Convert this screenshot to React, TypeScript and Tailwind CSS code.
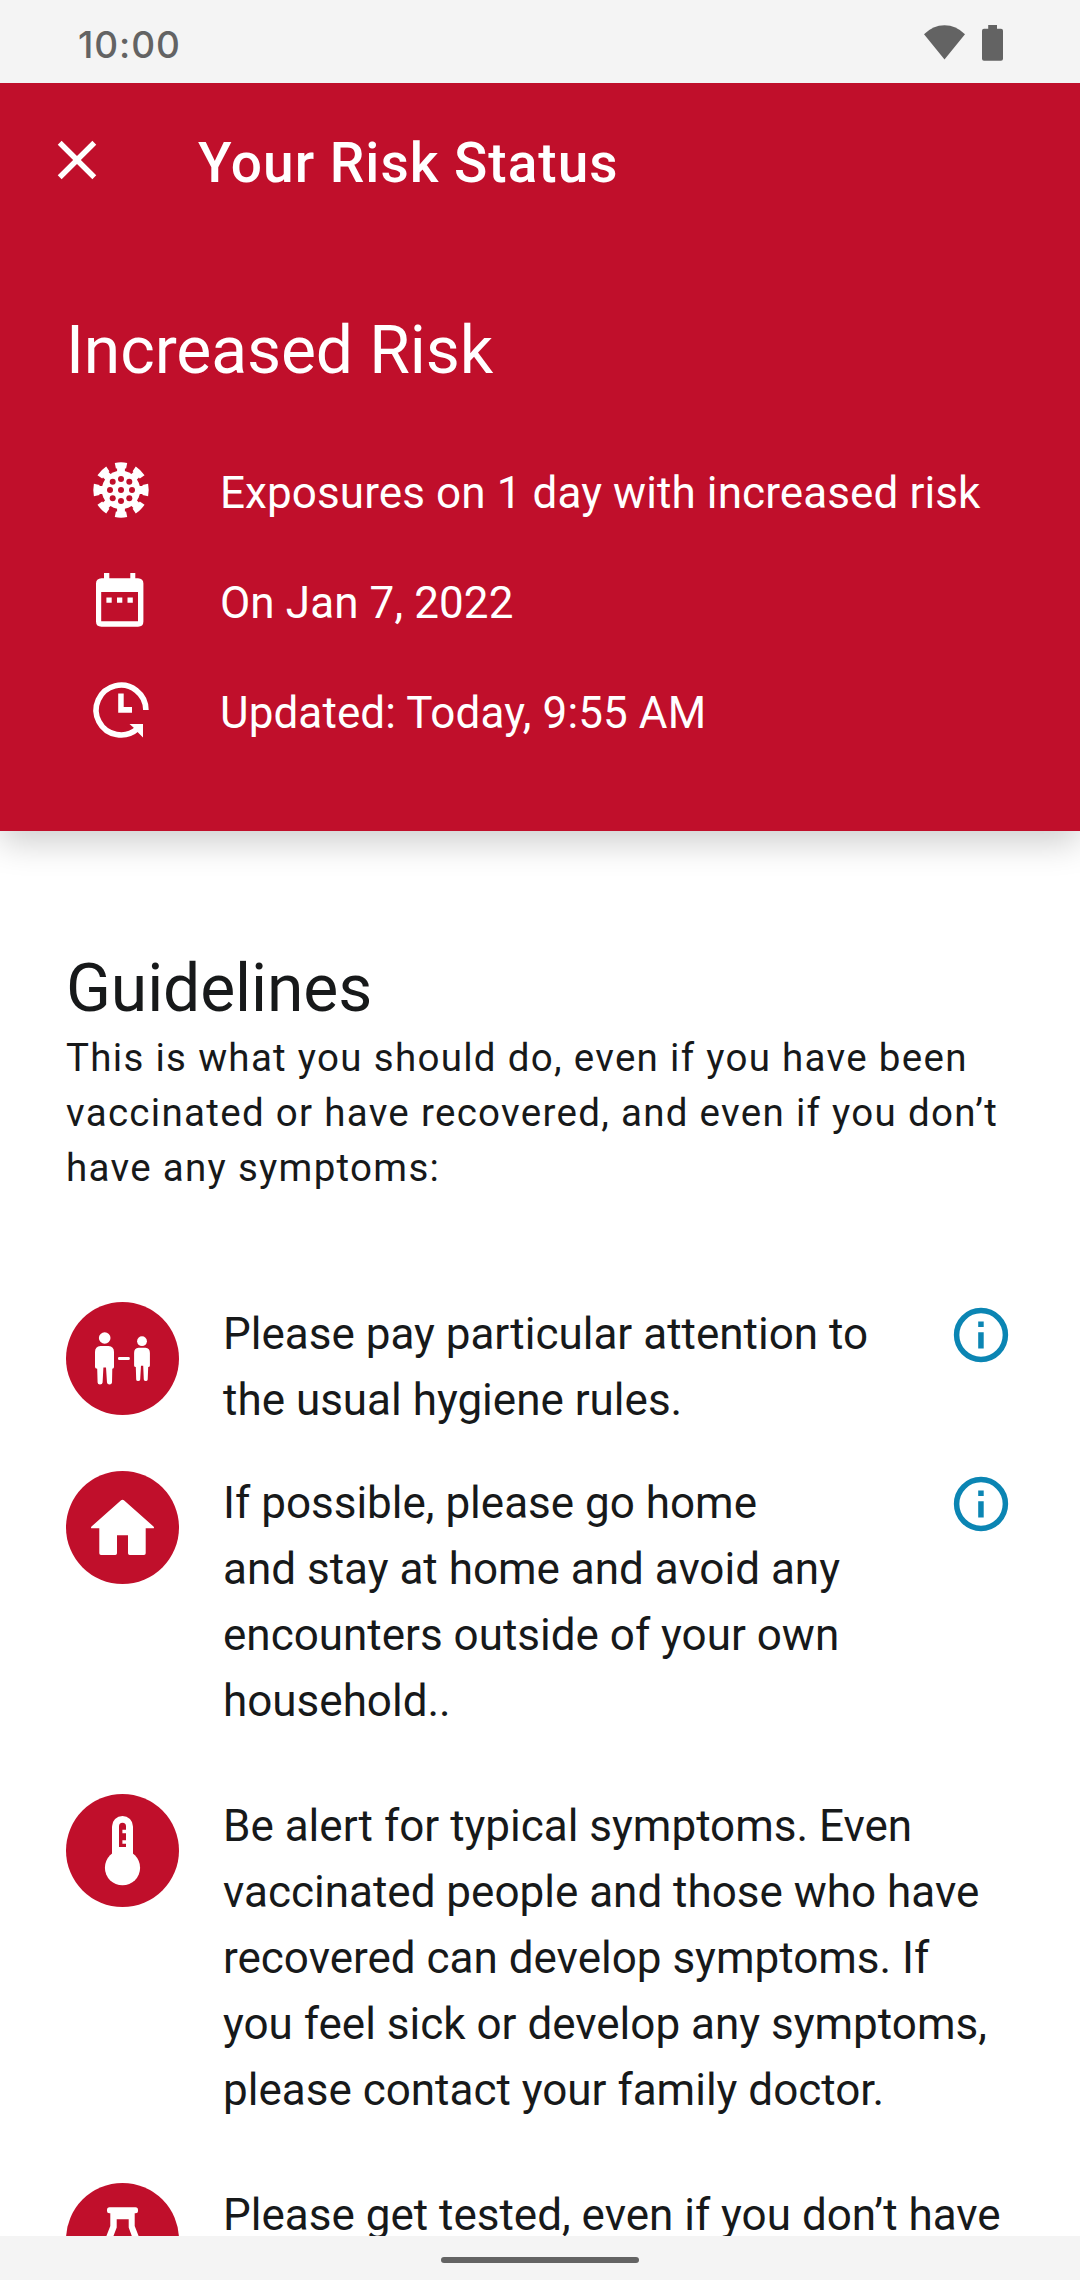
import React from "react";

const spikeAngles = [0, 45, 90, 135, 180, 225, 270, 315];
const virusDots = [
  [33, 33],
  [22, 33],
  [44, 33],
  [33, 22],
  [33, 44],
  [24.7, 24.7],
  [41.3, 24.7],
  [24.7, 41.3],
  [41.3, 41.3],
];

function VirusIcon() {
  return (
    <svg viewBox="0 0 66 66" className="size-[66px] shrink-0">
      <g fill="#fff">
        <circle cx="33" cy="33" r="19.2" />
        {spikeAngles.map((a) => (
          <path
            key={a}
            transform={`rotate(${a} 33 33)`}
            d="M26.8 5.9Q33 4.7 39.2 5.9L38.1 11.5H36.9V16H29.1V11.5H27.9Z"
          />
        ))}
      </g>
      {virusDots.map(([x, y]) => (
        <circle key={`${x}-${y}`} cx={x} cy={y} r="3" fill="#c00f2b" />
      ))}
    </svg>
  );
}

function CalendarIcon() {
  return (
    <svg viewBox="0 0 66 66" className="size-[66px] shrink-0" fill="#fff">
      <path
        fillRule="evenodd"
        d="M16 6H21.3V11.3H42.3V6H47.3V11.3H50Q55.4 11.8 55.4 16.5V54.5Q55.4 59.7 50 59.7H13.5Q8 59.7 8 54.5V16.5Q8 11.8 13.5 11.3H16ZM13.2 25V54.3H50V25Z"
      />
      <path d="M18.4 30.5H23.7V35.8H18.4ZM29 30.5H34.3V35.8H29ZM39.5 30.5H44.8V35.8H39.5Z" />
    </svg>
  );
}

function UpdateIcon() {
  return (
    <svg viewBox="0 0 66 66" className="size-[66px] shrink-0">
      <path d="M57.9 33A24.9 24.9 0 1 0 49.5 51.7" fill="none" stroke="#fff" strokeWidth="5.6" />
      <path d="M41.500 47H55V60.500L50 55.500L46 51Z" fill="#fff" />
      <path d="M30.200 16.500H35.700V30H44V35.800H30.200Z" fill="#fff" />
    </svg>
  );
}

function InfoIcon() {
  return (
    <svg viewBox="0 0 66 66" className="size-[66px] shrink-0">
      <circle cx="33" cy="33" r="24.4" fill="none" stroke="#0b85b3" strokeWidth="5.5" />
      <path d="M30.2 19.5H35.7V25H30.2ZM30.2 30.2H35.7V46.5H30.2Z" fill="#0b85b3" />
    </svg>
  );
}

function Badge({ children }: { children: React.ReactNode }) {
  return (
    <svg viewBox="0 0 113 113" className="size-[113px] shrink-0" fill="#fff">
      <circle cx="56.5" cy="56.5" r="56.5" fill="#c00f2b" />
      {children}
    </svg>
  );
}

function PeopleGlyph() {
  return (
    <>
      <circle cx="38.7" cy="36" r="5.8" />
      <path d="M34.5 44H42.5Q48 44.5 48 50V65Q48 66.8 46.3 66.8L46 80.5Q45.8 82.6 43.5 82.6T41 80.5L40 65.5H37.4L36.6 80.5Q36.4 82.6 34 82.6T31.6 80.5L31.2 66.8Q29 66.8 29 65V50Q29 44.5 34.5 44Z" />
      <rect x="52" y="55" width="11.8" height="3" rx="1.2" />
      <circle cx="76" cy="39.2" r="4.9" />
      <path d="M72.5 45.8H79.5Q83.9 46.3 83.9 51V63.5Q83.9 65 82.2 65L81.7 77.5Q81.5 79.1 79.8 79.1T77.8 77.5L77.2 63.7H75L74.2 77.5Q74 79.1 72.1 79.1T70.2 77.5L69.8 65Q68.1 65 68.1 63.5V51Q68.1 46.3 72.5 45.8Z" />
    </>
  );
}

function HomeGlyph() {
  return (
    <path d="M54.8 29.5Q56.5 28 58.2 29.5L87.5 55.5Q88.8 57.2 87 57.2H79.7V82.3Q79.7 84 78 84H63.7Q62 84 62 82.3V64.2H51V82.3Q51 84 49.3 84H35Q33.3 84 33.3 82.3V57.2H26Q24.2 57.2 25.5 55.5Z" />
  );
}

function ThermometerGlyph() {
  return (
    <>
      <path d="M46 32.5A10.5 10.5 0 0 1 67 32.5V62H46Z" />
      <circle cx="56.5" cy="73.7" r="17.6" />
      <path d="M53 32.2A3.5 3.5 0 0 1 60 32.2V35.8H56.4V39.3H60V46.3H56.4V49.8H60V53H53Z" fill="#c00f2b" />
    </>
  );
}

function FlaskGlyph() {
  return (
    <>
      <rect x="41" y="24.3" width="31" height="6" rx="2.5" />
      <path
        fillRule="evenodd"
        d="M44.3 30H68.7V43L80 72V84H33V72L44.3 43ZM50.7 36.3V44.5L41 70V77H72V70L62.7 44.5V36.3Z"
      />
    </>
  );
}

const facts = [
  { icon: <VirusIcon />, text: "Exposures on 1 day with increased risk" },
  { icon: <CalendarIcon />, text: "On Jan 7, 2022" },
  { icon: <UpdateIcon />, text: "Updated: Today, 9:55 AM" },
];

const guidelines = [
  {
    glyph: <PeopleGlyph />,
    lines: ["Please pay particular attention to", "the usual hygiene rules."],
    info: true,
    spacing: "mb-[38px]",
  },
  {
    glyph: <HomeGlyph />,
    lines: ["If possible, please go home", "and stay at home and avoid any", "encounters outside of your own", "household.."],
    info: true,
    spacing: "mb-[60px]",
  },
  {
    glyph: <ThermometerGlyph />,
    lines: [
      "Be alert for typical symptoms. Even",
      "vaccinated people and those who have",
      "recovered can develop symptoms. If",
      "you feel sick or develop any symptoms,",
      "please contact your family doctor.",
    ],
    info: false,
    spacing: "mb-[60px]",
  },
  {
    glyph: <FlaskGlyph />,
    lines: ["Please get tested, even if you don’t have"],
    info: false,
    spacing: "",
  },
];

export default function App() {
  return (
    <div className="flex h-[2280px] w-[1080px] flex-col overflow-hidden bg-white font-['Roboto',sans-serif] text-[#17191a]">
      <div className="relative z-10 flex h-[83px] shrink-0 items-start justify-between bg-[#f4f4f4] pr-[77px] pl-[78px] text-[#636363]">
        <span className="pt-[22px] font-['Inter',sans-serif] text-[37px] leading-[45px] font-medium tracking-[0.9px]">10:00</span>
        <div className="flex gap-[17px] pt-[25px]">
          <svg viewBox="0 0 41 37" className="h-[37px] w-[41px]" fill="currentColor">
            <path d="M0 9.3Q9 0.3 20.5 0.3T41 9.3L20.5 34.5Z" />
          </svg>
          <svg viewBox="0 0 21 37" className="h-[37px] w-[21px]" fill="currentColor">
            <path d="M6.2 0H15V3.8H19Q21 3.8 21 5.8V33.8Q21 35.8 19 35.8H2Q0 35.8 0 33.8V5.8Q0 3.8 2 3.8H6.2Z" />
          </svg>
        </div>
      </div>

      <header className="h-[748px] shrink-0 bg-[#c00f2b] text-white shadow-[0_11px_33px_rgba(0,0,0,0.2)]">
        <div className="flex h-[154px] items-center pl-[44px]">
          <svg viewBox="0 0 24 24" className="size-[66px]" fill="currentColor">
            <path d="M19 6.41L17.59 5 12 10.59 6.41 5 5 6.41 10.59 12 5 17.59 6.41 19 12 13.41 17.59 19 19 17.59 13.41 12z" />
          </svg>
          <h1 className="mt-[6px] ml-[88px] text-[55px] leading-[66px] font-medium tracking-[1px]">Your Risk Status</h1>
        </div>
        <h2 className="mt-[70px] ml-[66px] text-[66px] leading-[88px] tracking-[-0.1px]">Increased Risk</h2>
        <ul className="mt-[62px] ml-[88px] flex flex-col gap-[44px]">
          {facts.map((f) => (
            <li key={f.text} className="flex h-[66px] gap-[66px]">
              {f.icon}
              <span className="pt-[3px] text-[44px] leading-[66px] tracking-[0.1px] whitespace-nowrap">{f.text}</span>
            </li>
          ))}
        </ul>
      </header>

      <main className="flex min-h-0 grow flex-col overflow-hidden px-[66px] pt-[116px]">
        <h2 className="text-[66px] leading-[84px] tracking-[-0.1px]">Guidelines</h2>
        <p className="-mt-px text-[38.5px] leading-[55px] tracking-[1.3px] whitespace-nowrap">
          This is what you should do, even if you have been
          <br />
          vaccinated or have recovered, and even if you don’t
          <br />
          have any symptoms:
        </p>
        <ul className="mt-[106px] flex flex-col">
          {guidelines.map((g) => (
            <li key={g.lines[0]} className={`flex ${g.spacing}`}>
              <div className="pt-px">
                <Badge>{g.glyph}</Badge>
              </div>
              <div className="-mb-px ml-[44px] grow text-[44px] leading-[66px] whitespace-nowrap">
                {g.lines.map((line) => (
                  <div key={line}>{line}</div>
                ))}
              </div>
              {g.info && (
                <div className="pt-px">
                  <InfoIcon />
                </div>
              )}
            </li>
          ))}
        </ul>
      </main>

      <div className="flex h-[44px] shrink-0 justify-center bg-[#f4f4f4] pt-[21px]">
        <div className="h-[6px] w-[198px] rounded-full bg-[#636363]" />
      </div>
    </div>
  );
}
